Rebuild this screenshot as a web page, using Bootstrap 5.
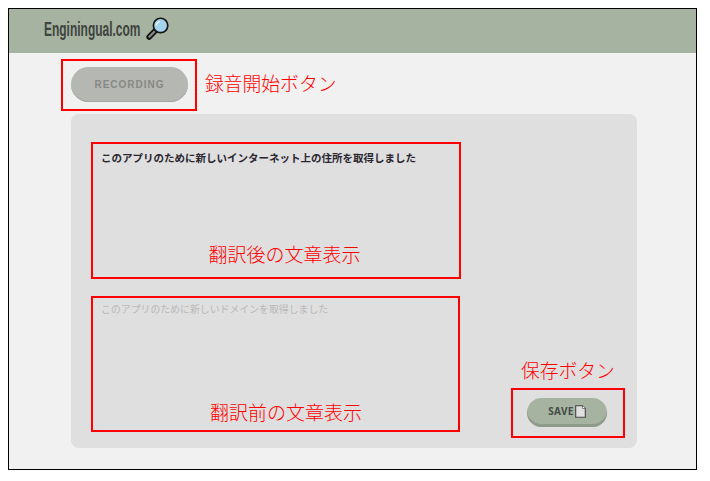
<!DOCTYPE html>
<html lang="ja">
<head>
<meta charset="utf-8">
<title>Enginingual.com</title>
<link href="https://cdn.jsdelivr.net/npm/bootstrap@5.3.0/dist/css/bootstrap.min.css" rel="stylesheet">
<style>
html, body { background: #fff; height: 100%; }
body { font-family: "Noto Sans CJK JP", "Liberation Sans", sans-serif; overflow: hidden; }
.app-frame { margin: 8px 0 0 8px; width: 689px; height: 462px; border: 1px solid #000; background: #f1f1f1; }
.app-bar { height: 44px; background: #a6b3a0; padding: 0 0 0 35px; }
.app-brand { font-family: "Liberation Sans", sans-serif; font-weight: 700; font-size: 21px; color: #3f4440; line-height: 1; margin: 0 6px 5px 0; transform: scaleX(.57); transform-origin: left; width: 96px; white-space: nowrap; }
.app-glass { margin-bottom: 5px; }
.rec-row { padding: 6px 0 0 52px; height: 61px; }
.note-box { border: 2px solid #f00; }
.rec-box { width: 136px; height: 52px; padding: 6px 0 0 8px; }
.pill { border: 0; border-radius: 18px; font-family: "Liberation Sans", sans-serif; font-weight: 700; }
.pill-rec { width: 117px; height: 35px; background: #b5b7b2; color: #868884; font-size: 10px; letter-spacing: 1px; box-shadow: inset 0 -1px 0 #a5a7a2; }
.note-label { color: #f00; font-size: 18.8px; line-height: 1.2; font-weight: 300; white-space: nowrap; }
.rec-label { margin: 0 0 0 8px; padding-top: 13px; }
.work-panel { margin-left: 62px; width: 566px; height: 334px; background: #dfdfdf; border-radius: 8px; padding: 28px 12px 10px 20px; }
.text-col { width: 370px; gap: 17px; }
.text-box { height: 137px; padding: 6px 8px 11px 8px; }
.text-box-b { width: 369px; height: 136px; padding: 3px 8px 6px 8px; }
.out-text { font-size: 10.5px; font-weight: 700; color: #2a2630; line-height: 16px; margin: 0; white-space: nowrap; }
.src-text { font-size: 9.9px; color: #b9b9b9; line-height: 16px; margin: 0; white-space: nowrap; }
.label-a { padding-left: 17px; font-size: 19px; }
.label-b { padding-left: 21px; font-size: 19px; }
.save-col { width: 114px; }
.save-label { margin-bottom: 6px; padding-left: 10px; }
.save-box { width: 114px; height: 50px; padding: 8px 0 0 14px; }
.pill-save { width: 80px; height: 29px; background: #a6b3a0; color: #454b47; font-family: "Noto Sans", "Liberation Sans", sans-serif; font-size: 10px; letter-spacing: .4px; box-shadow: inset 0 -3px 0 #8f9b8a; padding: 0 0 2px; gap: 1px; }
</style>
</head>
<body>
<div class="app-frame d-flex flex-column">
  <nav class="app-bar d-flex align-items-center">
    <span class="app-brand">Enginingual.com</span>
    <svg class="app-glass" width="24" height="24" viewBox="0 0 26 26" aria-hidden="true">
      <path d="M9.5 15.5 3.4 21.6" stroke="#111" stroke-width="6" stroke-linecap="round"/>
      <path d="M9 16 3.6 21.4" stroke="#888" stroke-width="2.4" stroke-linecap="round"/>
      <circle cx="15.8" cy="9.2" r="7.8" fill="#a5d3ee" stroke="#151515" stroke-width="1.8"/>
      <path d="M11 9a5 5 0 0 1 4-4" stroke="#e6f5fd" stroke-width="1.6" fill="none"/>
    </svg>
  </nav>
  <div class="rec-row d-flex align-items-start">
    <div class="note-box rec-box"><button type="button" class="pill pill-rec d-block">RECORDING</button></div>
    <p class="note-label rec-label">録音開始ボタン</p>
  </div>
  <main class="work-panel d-flex justify-content-between">
    <div class="text-col d-flex flex-column">
      <section class="note-box text-box d-flex flex-column justify-content-between">
        <p class="out-text">このアプリのために新しいインターネット上の住所を取得しました</p>
        <p class="note-label text-center m-0 label-a">翻訳後の文章表示</p>
      </section>
      <section class="note-box text-box text-box-b d-flex flex-column justify-content-between">
        <p class="src-text">このアプリのために新しいドメインを取得しました</p>
        <p class="note-label text-center m-0 label-b">翻訳前の文章表示</p>
      </section>
    </div>
    <div class="save-col d-flex flex-column justify-content-end">
      <p class="note-label save-label">保存ボタン</p>
      <div class="note-box save-box">
        <button type="button" class="pill pill-save d-flex align-items-center justify-content-center">SAVE
          <svg width="11" height="13" viewBox="0 0 11 13" aria-hidden="true"><path d="M.7.7h6.8l2.8 2.8v8.8H.7z" fill="#e0e0e0" stroke="#444" stroke-width="1.1"/><path d="M7.5.7v2.8h2.8" fill="#fff" stroke="#666" stroke-width=".8"/></svg>
        </button>
      </div>
    </div>
  </main>
</div>
<script src="https://cdn.jsdelivr.net/npm/bootstrap@5.3.0/dist/js/bootstrap.bundle.min.js"></script>
</body>
</html>
